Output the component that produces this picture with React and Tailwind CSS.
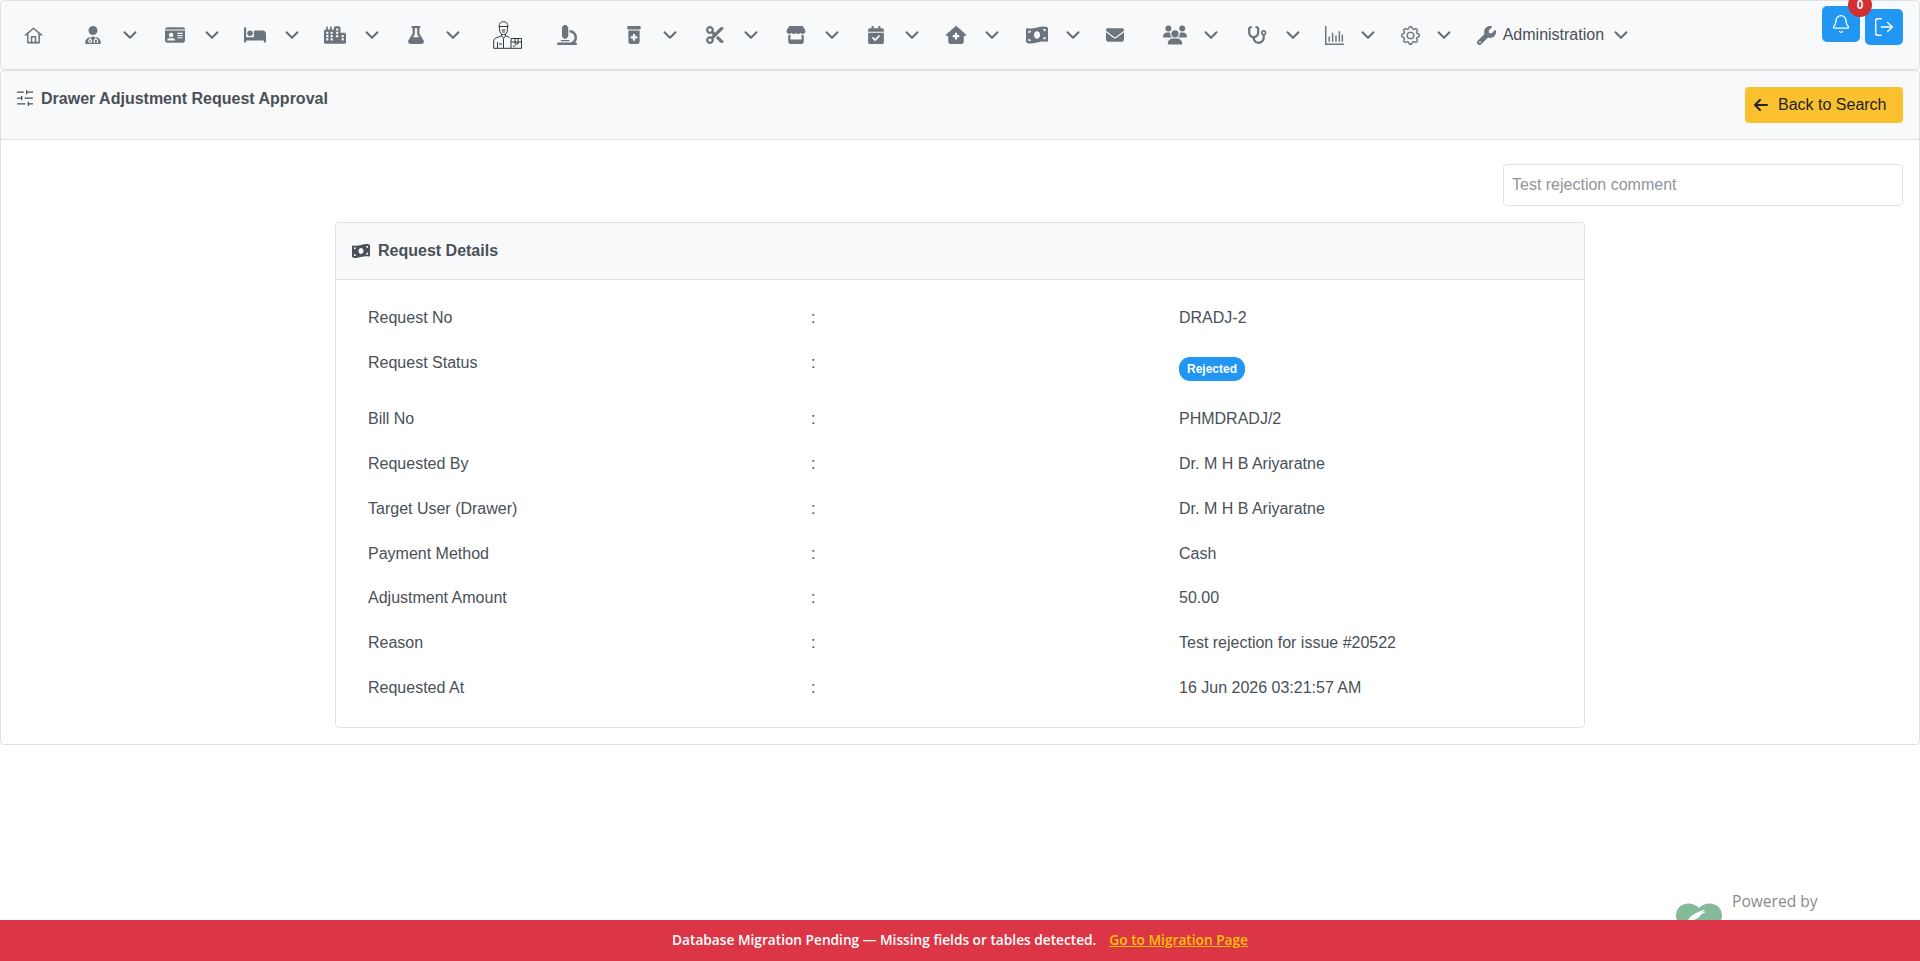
import React from "react";
import { ChevronDown, Bell, LogOut, SlidersHorizontal } from "lucide-react";
import { BsGear } from "react-icons/bs";
import {
  FaUserDoctor, FaIdCard, FaBed, FaCity, FaFlask, FaMicroscope, FaPrescriptionBottleMedical,
  FaScissors, FaStore, FaCalendarCheck, FaHouseMedical, FaMoneyBillWave, FaEnvelope, FaUsers,
  FaStethoscope, FaWrench, FaArrowLeft,
} from "react-icons/fa6";

const HomeIcon = () => (
  <svg viewBox="0 0 24 24" className="w-[19px] h-[19px]" fill="none" stroke="currentColor" strokeWidth="1.9" strokeLinejoin="round" strokeLinecap="round">
    <path d="M1.8 11.5 12 2.8l10.2 8.7" />
    <path d="M4.8 9.5V21h14.4V9.5" />
    <path d="M9.5 21v-7.5h5V21" />
  </svg>
);

const ChartIcon = () => (
  <svg viewBox="0 0 18 18" className="w-[19px] h-[19px]" fill="none" stroke="currentColor">
    <path d="M.7 0v17.300H18" strokeWidth="1.4" />
    <path d="M4 15V10M7.200 15V6.500M10.400 15V9M13.600 15V5M16.400 15V8" strokeWidth="1.4" />
  </svg>
);

const WorkerIcon = () => (
  <svg viewBox="0 0 29 28" className="w-[29px] h-[28px]" fill="none" stroke="#33383d" strokeWidth="1" strokeLinejoin="round">
    <path d="M6 5.500C6 2.500 8 .6 10.500 .6S15 2.500 15 5.500z" />
    <path d="M6.500 5.500v3.200c0 3 1.800 5 4 5s4-2 4-5V5.500" />
    <path d="M8.500 9h4M9 11h3" />
    <path d="M8.500 13v1.800l2 2.500 2-2.500V13" />
    <path d="M8.500 14.800 3 17c-1.400.6-2.300 1.600-2.300 3v7.300h17.300" />
    <path d="M12.500 14.800l4 1.700M4.500 21v6.300M10.500 17.300v10M6 23h3" />
    <path d="M18 17.500h10.500v9.800H18zM18 21h10.500M22 17.500v5.500h3v-5.500M20 25h2.500" />
  </svg>
);

const Chev = () => (
  <span className="w-4 flex justify-center text-[#5f6a75]">
    <ChevronDown size={22} strokeWidth={2.1} className="shrink-0" />
  </span>
);

const Item = ({ icon, chevron = true, w, gap = "ml-[17px]", box = "w-6" }) => (
  <div className={`flex items-center shrink-0 h-full ${w}`}>
    <span className={`${box} flex justify-center text-[#6c757d]`}>{icon}</span>
    {chevron && <span className={gap}><Chev /></span>}
  </div>
);

const rows = [
  ["Request No", "DRADJ-2"],
  ["Request Status", null],
  ["Bill No", "PHMDRADJ/2"],
  ["Requested By", "Dr. M H B Ariyaratne"],
  ["Target User (Drawer)", "Dr. M H B Ariyaratne"],
  ["Payment Method", "Cash"],
  ["Adjustment Amount", "50.00"],
  ["Reason", "Test rejection for issue #20522"],
  ["Requested At", "16 Jun 2026 03:21:57 AM"],
];

export default function App() {
  return (
    <div className="relative h-[961px] overflow-hidden bg-white text-[#495057] font-['Liberation_Sans',Arial,sans-serif] text-base">
      <nav className="h-[70px] flex items-start bg-[#f8f9fa] border border-[#dee2e6] rounded-[4px] pl-5 pr-4">
        <div className="flex items-center h-[68px]">
          <Item w="w-[60px]" chevron={false} icon={<HomeIcon />} />
          <Item w="w-[82px]" icon={<FaUserDoctor size={18} />} />
          <Item w="w-[80px]" icon={<FaIdCard size={20} />} />
          <Item w="w-[80px]" icon={<FaBed size={22} />} />
          <Item w="w-[81px]" icon={<FaCity size={22} />} />
          <Item w="w-[80.500px]" icon={<FaFlask size={18} />} />
          <Item w="w-[60px]" box="w-[45px]" chevron={false} icon={<WorkerIcon />} />
          <Item w="w-[77.700px]" box="w-[45px]" chevron={false} icon={<FaMicroscope size={20} />} />
          <Item w="w-[81px]" gap="ml-[16px]" icon={<FaPrescriptionBottleMedical size={18} />} />
          <Item w="w-[81px]" gap="ml-[16px]" icon={<FaScissors size={18} />} />
          <Item w="w-[80px]" gap="ml-[16px]" icon={<FaStore size={20} />} />
          <Item w="w-[80.300px]" gap="ml-[16px]" icon={<FaCalendarCheck size={18} />} />
          <Item w="w-[81px]" gap="ml-[16px]" icon={<FaHouseMedical size={20} />} />
          <Item w="w-[78px]" gap="ml-[16px]" icon={<FaMoneyBillWave size={22} />} />
          <Item w="w-[60px]" chevron={false} icon={<FaEnvelope size={18} />} />
          <Item w="w-[81.200px]" gap="ml-[16px]" icon={<FaUsers size={24} />} />
          <Item w="w-[78px]" gap="ml-[16px]" icon={<FaStethoscope size={20} />} />
          <Item w="w-[76px]" gap="ml-[13px]" icon={<ChartIcon />} />
          <Item w="w-[78px]" gap="ml-[13px]" icon={<BsGear size={19} stroke="currentColor" strokeWidth={0.25} />} />
          <div className="flex items-center">
            <span className="w-[20px] flex justify-center text-[#6c757d]"><FaWrench size={19} /></span>
            <span className="ml-[6px] text-[#495057]">Administration</span>
            <span className="ml-[9px]"><Chev /></span>
          </div>
        </div>
        <div className="ml-auto flex gap-[5px] items-start">
          <button className="relative mt-[5px] w-[38px] h-[36px] bg-[#2196f3] rounded-[5px] flex items-center justify-center text-white">
            <Bell size={20} strokeWidth={1.6} />
            <span className="absolute -top-[13px] -right-[12px] w-[24px] h-[24px] rounded-full bg-[#d32f2f] text-white text-xs font-bold flex items-center justify-center">0</span>
          </button>
          <button className="mt-[8px] w-[38px] h-[36px] bg-[#2196f3] rounded-[5px] flex items-center justify-center text-white">
            <LogOut size={22} strokeWidth={1.5} />
          </button>
        </div>
      </nav>

      <section className="h-[675px] border border-[#dee2e6] rounded-[4px]">
        <div className="h-[69px] bg-[#f8f9fa] border-b border-[#dee2e6] rounded-t-[4px] flex items-start justify-between pl-[14px] pr-4">
          <div className="flex items-center gap-[6px] pt-[16px] leading-6 font-bold">
            <SlidersHorizontal size={20} strokeWidth={1.5} className="-mt-[3px] text-[#495057]" />
            <span>Drawer Adjustment Request Approval</span>
          </div>
          <button className="mt-4 w-[158px] h-[36px] bg-[#fbc02d] rounded-[4px] flex items-center justify-start pl-[8px] gap-[9px] text-[#212529]">
            <FaArrowLeft size={16} />
            <span>Back to Search</span>
          </button>
        </div>
        <div className="flex justify-end pr-4 pt-[24px]">
          <input
            className="w-[400px] h-[42px] border border-[#dee2e6] rounded-[4px] px-2 outline-none placeholder:text-[#8f959b]"
            placeholder="Test rejection comment"
            defaultValue=""
          />
        </div>
        <div className="mt-4 ml-[334px] w-[1250px] h-[506px] border border-[#dee2e6] rounded-[4px] overflow-hidden">
          <div className="h-[57px] bg-[#f8f9fa] border-b border-[#dee2e6] flex items-center gap-2 pl-4 font-bold">
            <FaMoneyBillWave size={18} className="text-[#495057]" />
            <span>Request Details</span>
          </div>
          <div className="pl-[32px] pt-[26px]">
            {rows.map(([label, value]) => (
              <div key={label} className={`grid grid-cols-[443px_368px_1fr] leading-6 ${value ? "h-[44.900px]" : "h-[56px]"}`}>
                <div>{label}</div>
                <div>:</div>
                <div>
                  {value ?? (
                    <span className="inline-flex mt-[6px] w-[66px] h-[24px] items-center justify-center rounded-[11px] bg-[#2196f3] text-white text-xs font-bold">Rejected</span>
                  )}
                </div>
              </div>
            ))}
          </div>
        </div>
      </section>

      <div className="absolute left-[1676px] top-[891px] flex items-start gap-[10px]">
        <svg viewBox="0 0 46 30" className="w-[46px] h-[30px] mt-[12px]">
          <path d="M23 5C19 1 13-.5 7.500 1.500 2 3.500 0 8 0 13c0 9 12 15 23 17 11-2 23-8 23-17 0-5-2-9.500-7.500-11.500C33-.5 27 1 23 5z" fill="#85bb9a" />
          <path d="M12 17c2-3.500 5-5.500 8-7l8-3.500.6 1-3.500 2 3.500-1 .4 1-4 2-2 3-6 3z" fill="#fff" />
        </svg>
        <span className="text-[#8a8a8a] font-['Open_Sans',sans-serif] text-[15.600px] leading-5">Powered by</span>
      </div>

      <div className="fixed bottom-0 left-0 right-0 h-[41px] bg-[#dc3545] flex items-center justify-center gap-[13px] text-[13.700px] font-semibold font-['Open_Sans',sans-serif] text-white">
        <span>Database Migration Pending — Missing fields or tables detected.</span>
        <a className="text-[#ffc107] underline" href="#">Go to Migration Page</a>
      </div>
    </div>
  );
}
